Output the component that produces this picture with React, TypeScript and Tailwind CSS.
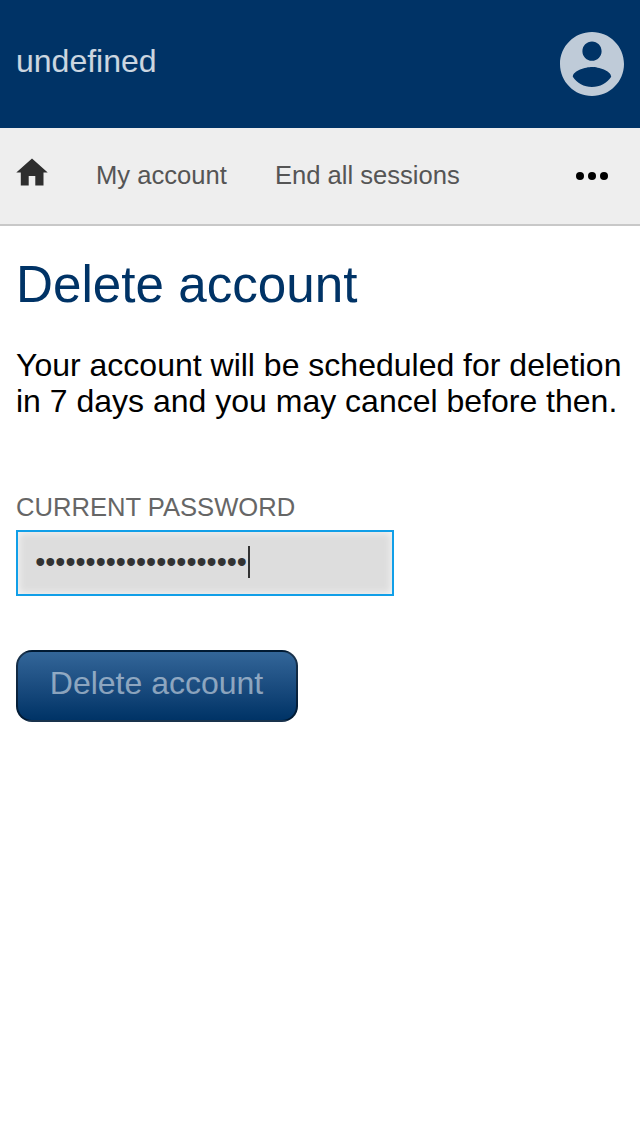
import React from "react";

export default function App() {
  return (
    <div className="min-h-[1136px] w-[640px] bg-white font-['Liberation_Sans',Arial,sans-serif] text-black">
      <header className="flex h-32 items-center justify-between bg-[#003366] px-4">
        <span className="pb-1.5 text-[32px] leading-9 text-white/80">undefined</span>
        <svg className="size-16" viewBox="2 2 20 20" fill="#fff" fillOpacity="0.75">
          <path d="M12 2C6.48 2 2 6.48 2 12s4.48 10 10 10 10-4.48 10-10S17.52 2 12 2zm0 3c1.66 0 3 1.34 3 3s-1.34 3-3 3-3-1.34-3-3 1.34-3 3-3zm0 14.2c-2.5 0-4.71-1.28-6-3.22.03-1.99 4-3.08 6-3.08 1.99 0 5.97 1.09 6 3.08-1.29 1.94-3.5 3.22-6 3.22z" />
        </svg>
      </header>
      <nav className="flex h-[98px] items-center border-b-2 border-[#c8c8c8] bg-[#eeeeee] pl-4 pr-8 text-[25.6px] leading-[30px] text-[#555]">
        <svg className="mb-2 h-7 w-8" viewBox="0 0 32 28" fill="#2e2e2e">
          <path d="M16 0.500 0.300 14.500H4.800V27.500H12.700V18H19.300V27.500H27.500V14.500H31.700z" />
        </svg>
        <a className="mb-0.5 ml-12">My account</a>
        <a className="mb-0.5 ml-12">End all sessions</a>
        <svg className="ml-auto h-2 w-8" viewBox="0 0 32 8" fill="#000">
          <circle cx="4" cy="4" r="4" />
          <circle cx="16" cy="4" r="4" />
          <circle cx="28" cy="4" r="4" />
        </svg>
      </nav>
      <main className="px-4 pt-[30px]">
        <h1 className="text-[51.2px] leading-[58px] text-[#003366]">Delete account</h1>
        <p className="mt-[33px] whitespace-nowrap text-[32px] leading-9">
          Your account will be scheduled for deletion
          <br />
          in 7 days and you may cancel before then.
        </p>
        <form className="mt-[73px]">
          <label className="block text-[25.6px] leading-[30px] text-[#666]">CURRENT PASSWORD</label>
          <div className="mt-2 flex h-[66px] w-[378px] items-center border-2 border-[#119fe8] bg-[#dddddd] pb-0.5 pl-[17.2px] text-[#333] shadow-[inset_0_0_8px_rgba(255,255,255,0.85)]">
            <span className="text-[28.8px] leading-8">•••••••••••••••••••••</span>
            <span className="ml-[0.8px] h-8 w-0.5 bg-[#333]" />
          </div>
          <button
            type="button"
            className="mt-[54px] h-[72px] w-[282px] rounded-[16px] border-2 border-black/50 bg-linear-to-b from-[#336699] to-[#003366] pb-1.5 pr-px text-[32px] leading-9 text-white/50"
          >
            Delete account
          </button>
        </form>
      </main>
    </div>
  );
}
